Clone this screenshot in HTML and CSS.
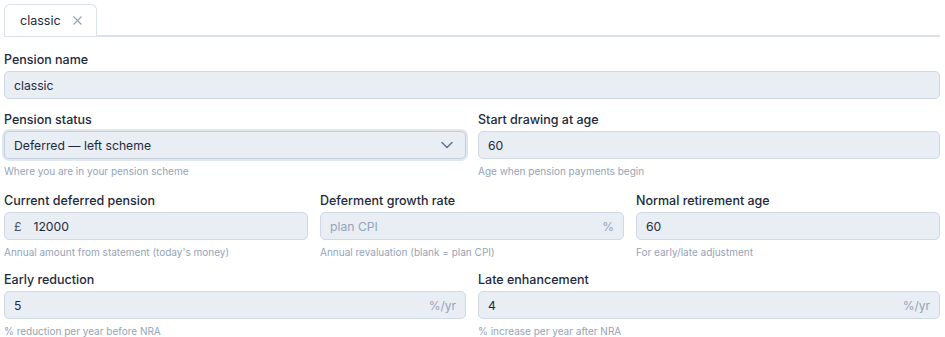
FILE: index.html
```html
<!DOCTYPE html>
<html>
<head>
    <meta charset="UTF-8">
    <meta name="viewport" content="width=device-width, initial-scale=1.0">
    <title>Pension</title>
    <link rel="stylesheet" href="styles.css">
</head>
<body>
    <div class="tabs">
        <div class="tab">
            <span>classic</span>
            <svg class="tab-close" width="9" height="9" viewBox="0 0 9 9"><path d="M0.5 0.5 8.5 8.5M8.5 0.5 0.5 8.5" stroke="#94a3b8" stroke-width="1.1" fill="none"/></svg>
        </div>
    </div>

    <div class="form">
        <div class="row one">
            <div class="field">
                <label>Pension name</label>
                <div class="input"><span class="value">classic</span></div>
            </div>
        </div>

        <div class="row two">
            <div class="field">
                <label>Pension status</label>
                <div class="input select focus">
                    <span class="value">Deferred — left scheme</span>
                    <svg class="chevron" width="12" height="8" viewBox="0 0 12 8"><path d="M1 1.5 6 6.5 11 1.5" fill="none" stroke="#64748b" stroke-width="1.5" stroke-linecap="round" stroke-linejoin="round"/></svg>
                </div>
                <div class="help">Where you are in your pension scheme</div>
            </div>
            <div class="field">
                <label>Start drawing at age</label>
                <div class="input"><span class="value">60</span></div>
                <div class="help">Age when pension payments begin</div>
            </div>
        </div>

        <div class="row three">
            <div class="field">
                <label>Current deferred pension</label>
                <div class="input"><span class="prefix">£</span><span class="value">12000</span></div>
                <div class="help">Annual amount from statement (today's money)</div>
            </div>
            <div class="field">
                <label>Deferment growth rate</label>
                <div class="input"><span class="value placeholder">plan CPI</span><span class="suffix">%</span></div>
                <div class="help">Annual revaluation (blank = plan CPI)</div>
            </div>
            <div class="field">
                <label>Normal retirement age</label>
                <div class="input"><span class="value">60</span></div>
                <div class="help">For early/late adjustment</div>
            </div>
        </div>

        <div class="row two">
            <div class="field">
                <label>Early reduction</label>
                <div class="input"><span class="value">5</span><span class="suffix">%/yr</span></div>
                <div class="help">% reduction per year before NRA</div>
            </div>
            <div class="field">
                <label>Late enhancement</label>
                <div class="input"><span class="value">4</span><span class="suffix">%/yr</span></div>
                <div class="help">% increase per year after NRA</div>
            </div>
        </div>
    </div>
</body>
</html>
```

FILE: styles.css
```css
body {
    font-family: Inter, "Noto Sans", sans-serif;
    margin: 0;
    padding: 4px 5px 0 4px;
    background-color: white;
    color: #1e293b;
}

.tabs {
    display: flex;
    height: 31px;
    border-bottom: 2px solid #dbe2ea;
}

.tab {
    display: flex;
    align-items: center;
    gap: 12px;
    height: 32px;
    padding: 0 14px 0 15px;
    border: 1px solid #dbe2ea;
    border-bottom: none;
    border-radius: 6px 6px 0 0;
    background-color: white;
    font-size: 12.5px;
    box-sizing: border-box;
}

.form {
    display: flex;
    flex-direction: column;
    gap: 12px;
    margin-top: 14px;
}

.row {
    display: grid;
    column-gap: 12px;
}

.one { grid-template-columns: 1fr; }
.two { grid-template-columns: 1fr 1fr; }
.three {
    grid-template-columns: 1fr 1fr 1fr;
    margin-top: 2px;
}

.field label {
    display: block;
    font-size: 12.5px;
    font-weight: 500;
    line-height: 17px;
    margin-bottom: 3px;
    color: #1e293b;
}

.input {
    display: flex;
    align-items: center;
    height: 28px;
    padding: 0 9px;
    border: 1px solid #cfd8e3;
    border-radius: 5px;
    background-color: #e9eef4;
    font-size: 12.2px;
    color: #1e293b;
    box-sizing: border-box;
}

.input .value {
    flex: 1;
}

.placeholder {
    color: #94a3b8;
}

.prefix {
    color: #475569;
    margin-right: 12px;
}

.suffix {
    color: #94a3b8;
    font-size: 12px;
}

.select {
    padding-right: 12px;
}

.focus {
    border-color: #c3cedb;
    box-shadow: 0 0 0 2px #e2e8f0;
}

.help {
    margin-top: 5px;
    font-size: 10px;
    line-height: 14px;
    color: #94a3b8;
}
```
